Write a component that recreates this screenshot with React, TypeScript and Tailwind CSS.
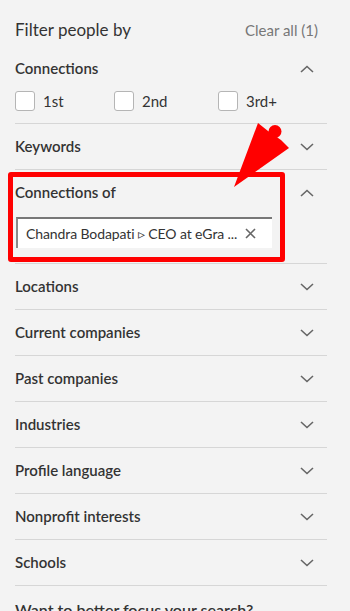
const SECTIONS = [
  'Locations',
  'Current companies',
  'Past companies',
  'Industries',
  'Profile language',
  'Nonprofit interests',
  'Schools',
];

function Chevron({ up }: { up?: boolean }) {
  return (
    <svg width="14" height="8" viewBox="0 0 14 8" className="mr-[13px] shrink-0 text-[#666]">
      <path
        d={up ? 'M1 7 L7 1.5 L13 7' : 'M1 1 L7 6.5 L13 1'}
        fill="none"
        stroke="currentColor"
        strokeWidth="1.6"
      />
    </svg>
  );
}

function Row({ label, up }: { label: string; up?: boolean }) {
  return (
    <div className="flex h-[45px] items-center justify-between">
      <span className="text-[15px] font-semibold text-[#333]">{label}</span>
      <Chevron up={up} />
    </div>
  );
}

function Check({ label, className }: { label: string; className?: string }) {
  return (
    <label className={`flex items-center gap-2 ${className ?? ''}`}>
      <span className="h-5 w-5 rounded-[3px] border border-[#b5b5b5] bg-white" />
      <span className="text-[15px] text-[#333]">{label}</span>
    </label>
  );
}

export default function App() {
  return (
    <div
      className="relative h-[611px] w-[350px] overflow-hidden bg-[#f3f3f3]"
      style={{ fontFamily: 'Lato, "Noto Sans", sans-serif' }}
    >
      <div className="w-[327px] pl-[15px]">
        {/* Header */}
        <div className="flex h-[46px] items-start justify-between pt-[18px]">
          <span className="text-[17px] leading-6 text-[#333]">Filter people by</span>
          <span className="mr-[9px] text-[15px] leading-6 text-[#777]">Clear all (1)</span>
        </div>

        {/* Connections */}
        <div className="border-b border-[#d6d6d6] pb-[12px]">
          <Row label="Connections" up />
          <div className="flex h-5 items-center">
            <Check label="1st" className="w-[99px]" />
            <Check label="2nd" className="w-[104px]" />
            <Check label="3rd+" />
          </div>
        </div>

        <div className="border-b border-[#d6d6d6]">
          <Row label="Keywords" />
        </div>

        {/* Connections of */}
        <div className="border-b border-[#d6d6d6] pb-[15px]">
          <Row label="Connections of" up />
          <div className="ml-px mt-[2px] flex h-[31px] w-[256px] items-center gap-[3px] border-l-2 border-t-2 border-l-[#8a8a8a] border-t-[#777] bg-white pl-[8px] pr-[16px]">
            <span className="flex-1 overflow-hidden whitespace-nowrap text-[14px] tracking-[-0.1px] text-[#333]">
              Chandra Bodapati ▹ CEO at eGra ...
            </span>
            <svg width="11" height="11" viewBox="0 0 11 11" className="shrink-0 text-[#666]">
              <path d="M1 1 L10 10 M10 1 L1 10" stroke="currentColor" strokeWidth="1.6" />
            </svg>
          </div>
        </div>

        {SECTIONS.map(s => (
          <div key={s} className="border-b border-[#d6d6d6]">
            <Row label={s} />
          </div>
        ))}

        <div className="pt-[14px] text-[16px] font-semibold leading-5 text-[#333]">
          Want to better focus your search?
        </div>
      </div>

      {/* Annotation overlay */}
      <div className="absolute left-[8px] top-[172px] h-[90px] w-[277px] rounded-[3px] border-[5px] border-[#ff0000]" />
      <svg className="pointer-events-none absolute left-0 top-0" width="350" height="611">
        <polygon points="258,123 268,131 281,140 289,148 234,187" fill="#ff0000" />
        <circle cx="275" cy="131.5" r="6.5" fill="#ff0000" />
      </svg>
    </div>
  );
}
